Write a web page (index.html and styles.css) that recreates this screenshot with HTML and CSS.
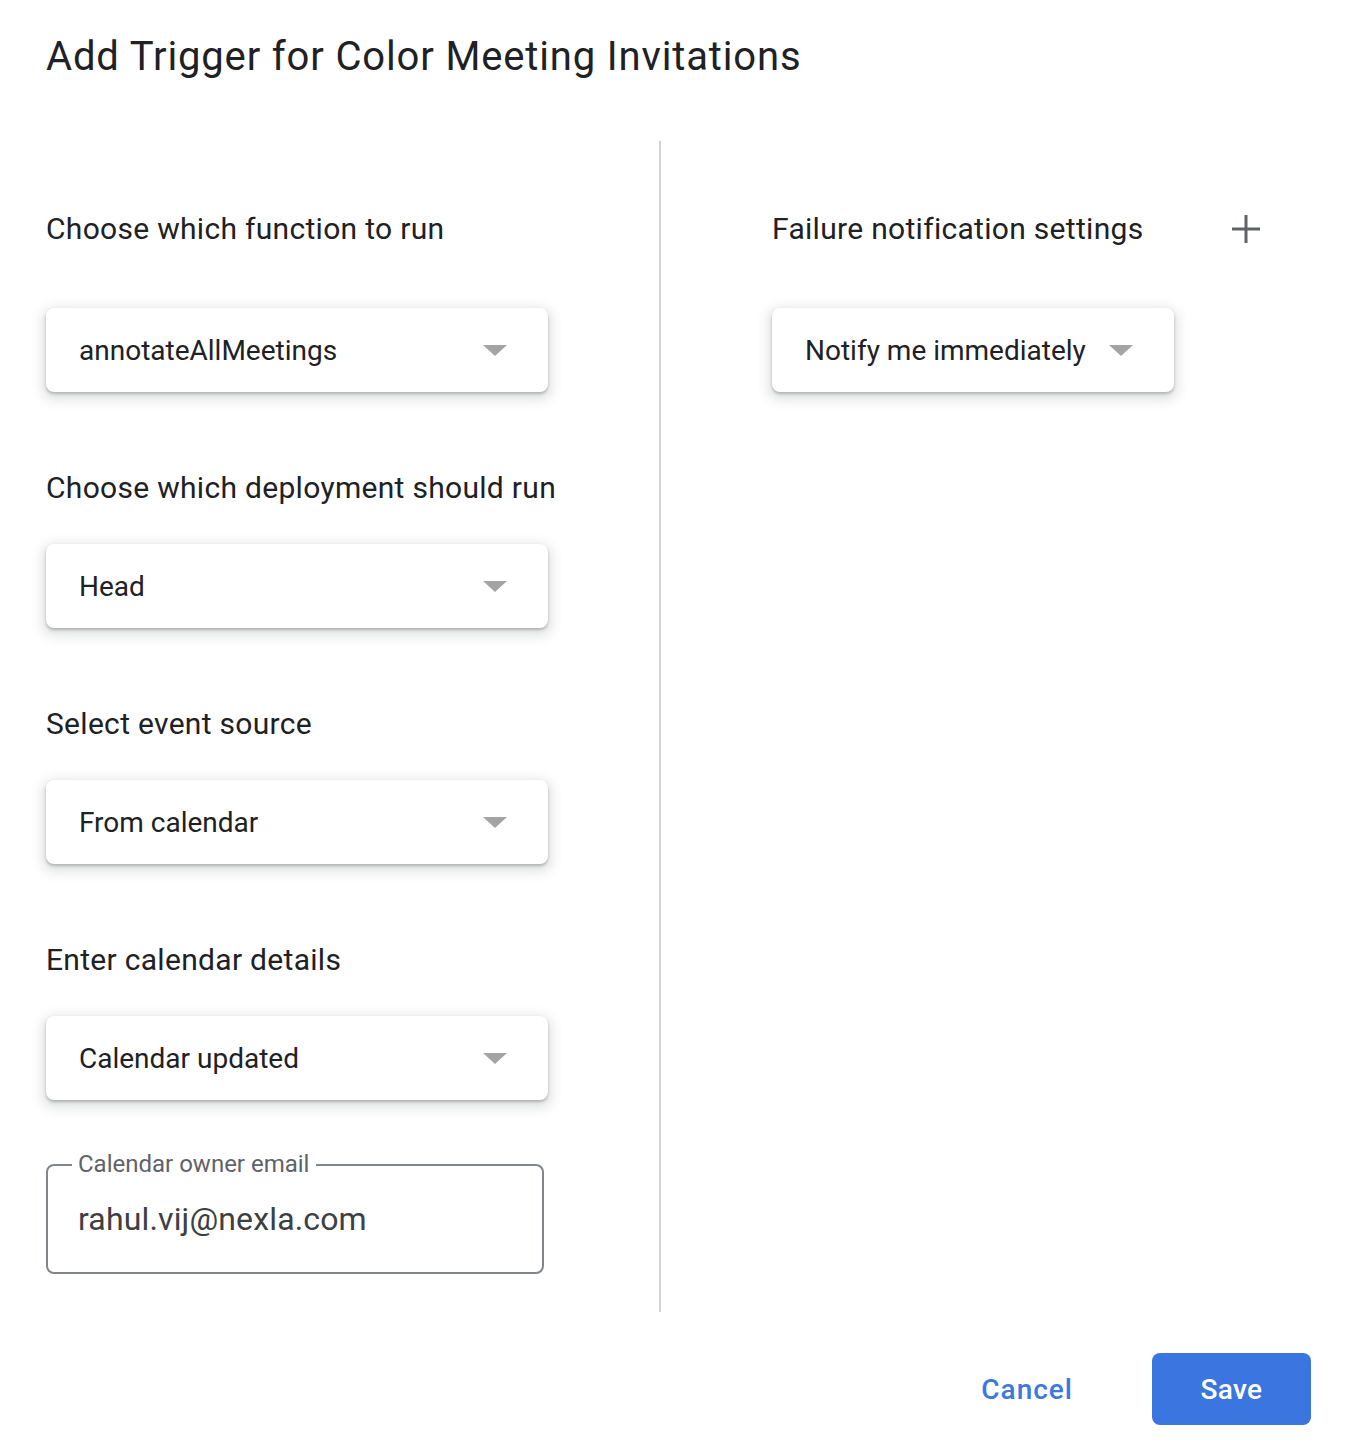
FILE: index.html
```html
<!DOCTYPE html>
<html lang="en">
<head>
<meta charset="utf-8">
<title>Add Trigger</title>
<link rel="stylesheet" href="styles.css">
</head>
<body>
<div class="dialog">
  <h1 class="title">Add Trigger for Color Meeting Invitations</h1>
  <div class="columns">
    <div class="col-left">
      <div class="label label-first">Choose which function to run</div>
      <div class="select"><span class="select-text">annotateAllMeetings</span><span class="arrow"></span></div>

      <div class="label">Choose which deployment should run</div>
      <div class="select"><span class="select-text">Head</span><span class="arrow"></span></div>

      <div class="label">Select event source</div>
      <div class="select"><span class="select-text">From calendar</span><span class="arrow"></span></div>

      <div class="label">Enter calendar details</div>
      <div class="select"><span class="select-text">Calendar updated</span><span class="arrow"></span></div>

      <div class="field">
        <span class="field-label">Calendar owner email</span>
        <span class="field-value">rahul.vij@nexla.com</span>
      </div>
    </div>
    <div class="divider"></div>
    <div class="col-right">
      <div class="right-head">
        <div class="label label-inline">Failure notification settings</div>
        <svg class="plus" width="28" height="28" viewBox="0 0 28 28"><path d="M14 0v28M0 14h28" stroke="#5f6368" stroke-width="3" fill="none"/></svg>
      </div>
      <div class="select select-narrow"><span class="select-text">Notify me immediately</span><span class="arrow"></span></div>
    </div>
  </div>
  <div class="actions">
    <button class="btn-text">Cancel</button>
    <button class="btn-primary">Save</button>
  </div>
</div>
</body>
</html>
```
FILE: styles.css
```css
* { box-sizing: border-box; }
html, body { margin: 0; padding: 0; background: #fff; }
body { font-family: Roboto, "Noto Sans", Arial, sans-serif; color: #202124; }

.dialog {
  width: 1358px;
  padding: 33px 47px 0 46px;
}

.title {
  margin: 0;
  font-family: Roboto, "Noto Sans", Arial, sans-serif;
  font-weight: 400;
  font-size: 40px;
  line-height: 48px;
  letter-spacing: 0.85px;
  color: #202124;
}

.columns {
  display: flex;
  margin-top: 60px;
  height: 1171px;
}

.col-left {
  width: 613px;
  padding-top: 68px;
}

.divider {
  width: 2px;
  background: #d0d3d6;
}

.col-right {
  flex: 1;
  padding-left: 111px;
  padding-top: 68px;
}

.label {
  font-size: 30px;
  line-height: 40px;
  letter-spacing: 0.3px;
  color: #202124;
  margin-bottom: 36px;
}
.label-first { margin-bottom: 59px; }
.label-inline { margin-bottom: 0; }

.right-head {
  display: flex;
  align-items: center;
  justify-content: space-between;
  padding-right: 51px;
  margin-bottom: 59px;
}
.plus { display: block; }

.select {
  width: 502px;
  height: 84px;
  border-radius: 8px;
  background: #fff;
  display: flex;
  align-items: center;
  justify-content: space-between;
  padding: 0 41px 0 33px;
  box-shadow: 0 2px 3px rgba(60, 64, 67, 0.30), 0 4px 12px 4px rgba(60, 64, 67, 0.15);
  margin-bottom: 76px;
}
.select-narrow { width: 402px; }

.select-text {
  font-size: 28px;
  color: #202124;
}

.arrow {
  width: 0;
  height: 0;
  border-left: 12px solid transparent;
  border-right: 12px solid transparent;
  border-top: 11px solid #a4a4a4;
}

.field {
  position: relative;
  width: 498px;
  height: 110px;
  margin-top: -12px;
  border: 2px solid #80868b;
  border-radius: 8px;
  display: flex;
  align-items: center;
  padding-left: 30px;
}
.field-label {
  position: absolute;
  top: -16px;
  left: 24px;
  padding: 0 7px 0 6px;
  background: #fff;
  font-size: 24px;
  line-height: 28px;
  color: #5f6368;
}
.field-value {
  font-size: 32px;
  letter-spacing: 0.15px;
  color: #3c4043;
}

.actions {
  display: flex;
  justify-content: flex-end;
  align-items: center;
  gap: 47px;
  margin-top: 41px;
}
.btn-text, .btn-primary {
  font-family: Roboto, "Noto Sans", Arial, sans-serif;
  font-size: 28px;
  font-weight: 500;
  border: none;
  cursor: pointer;
  height: 72px;
  border-radius: 8px;
}
.btn-text {
  background: transparent;
  color: #3b78e0;
  letter-spacing: 1px;
  padding: 0 32px;
}
.btn-primary {
  background: #3b75e0;
  color: #fff;
  letter-spacing: 0.3px;
  width: 159px;
}
```
